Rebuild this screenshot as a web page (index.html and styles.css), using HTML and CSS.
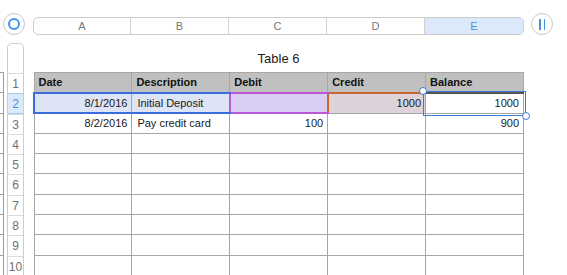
FILE: index.html
```html
<!DOCTYPE html>
<html lang="en">
<head>
    <meta charset="UTF-8">
    <title>Table 6</title>
    <link rel="stylesheet" href="styles.css">
</head>
<body>
    <div class="topbar">
        <div class="circle-btn"><span class="ring"></span></div>
        <div class="col-headers">
            <div class="col-h">A</div>
            <div class="col-h">B</div>
            <div class="col-h">C</div>
            <div class="col-h">D</div>
            <div class="col-h active">E</div>
        </div>
        <div class="circle-btn pause"><span class="bar"></span><span class="bar"></span></div>
    </div>

    <div class="sheet">
        <div class="edge">
            <div class="edge-cell"></div><div class="edge-cell"></div><div class="edge-cell"></div>
            <div class="edge-cell"></div><div class="edge-cell"></div><div class="edge-cell"></div>
            <div class="edge-cell"></div><div class="edge-cell"></div><div class="edge-cell"></div>
            <div class="edge-cell"></div>
        </div>
        <div class="row-headers">
            <div class="rh-top"></div>
            <div class="rh">1</div>
            <div class="rh active">2</div>
            <div class="rh">3</div>
            <div class="rh">4</div>
            <div class="rh">5</div>
            <div class="rh">6</div>
            <div class="rh">7</div>
            <div class="rh">8</div>
            <div class="rh">9</div>
            <div class="rh">10</div>
        </div>
        <div class="table-wrap">
            <div class="title">Table 6</div>
            <table>
                <tr class="head">
                    <th>Date</th><th>Description</th><th>Debit</th><th>Credit</th><th>Balance</th>
                </tr>
                <tr>
                    <td class="num hl-a">8/1/2016</td>
                    <td class="hl-b">Initial Deposit</td>
                    <td class="hl-c"></td>
                    <td class="num hl-d">1000</td>
                    <td class="num sel">1000<span class="handle tl"></span><span class="handle br"></span></td>
                </tr>
                <tr>
                    <td class="num">8/2/2016</td>
                    <td>Pay credit card</td>
                    <td class="num">100</td>
                    <td></td>
                    <td class="num">900</td>
                </tr>
                <tr><td></td><td></td><td></td><td></td><td></td></tr>
                <tr><td></td><td></td><td></td><td></td><td></td></tr>
                <tr><td></td><td></td><td></td><td></td><td></td></tr>
                <tr><td></td><td></td><td></td><td></td><td></td></tr>
                <tr><td></td><td></td><td></td><td></td><td></td></tr>
                <tr><td></td><td></td><td></td><td></td><td></td></tr>
                <tr><td></td><td></td><td></td><td></td><td></td></tr>
            </table>
        </div>
    </div>
</body>
</html>
```

FILE: styles.css
```css
body {
    margin: 0;
    background: #fff;
    font-family: "Liberation Sans", Arial, sans-serif;
    color: #111;
    overflow: hidden;
}
.topbar {
    display: flex;
    align-items: center;
    height: 22px;
    margin-top: 13px;
    padding-left: 3px;
}
.circle-btn {
    width: 20px;
    height: 20px;
    border: 1px solid #c9c9c9;
    border-radius: 50%;
    display: flex;
    align-items: center;
    justify-content: center;
    flex: none;
}
.ring {
    width: 8px;
    height: 8px;
    border: 2px solid #3d95ee;
    border-radius: 50%;
}
.pause {
    margin-left: 7px;
    gap: 3px;
}
.pause .bar {
    width: 1.5px;
    height: 11px;
    background: #4a90e2;
}
.col-headers {
    display: flex;
    margin-left: 8px;
    width: 491px;
    height: 18px;
    margin-top: 3px;
    box-sizing: border-box;
    border: 1px solid #cbcbcb;
    border-radius: 5px;
    overflow: hidden;
}
.col-h {
    flex: none;
    box-sizing: border-box;
    width: 98px;
    border-right: 1px solid #d2d2d2;
    text-align: center;
    font-size: 11px;
    line-height: 16px;
    color: #777;
}
.col-h:first-child {
    width: 97px;
}
.col-h.active {
    flex: 1;
    border-right: none;
    background: #dce9fb;
    color: #4a90e2;
}
.sheet {
    display: flex;
    align-items: flex-start;
    margin-top: 8px;
}
.edge {
    width: 3px;
    margin-top: 29px;
    border-right: 1px solid #9c9c9c;
}
.edge-cell {
    box-sizing: border-box;
    height: 20.3px;
    border-top: 1px solid #9c9c9c;
}
.row-headers {
    margin-left: 3px;
    width: 17px;
    box-sizing: border-box;
    border: 1px solid #cdcdcd;
    border-bottom: none;
    border-radius: 5px 5px 0 0;
}
.rh-top {
    height: 29px;
}
.rh {
    box-sizing: border-box;
    height: 20.3px;
    border-top: 1px solid #dcdcdc;
    text-align: center;
    font-size: 12px;
    line-height: 20px;
    color: #707070;
}
.rh.active {
    background: #dce9fb;
    color: #4a90e2;
    border-top-color: #a9c6ea;
    border-bottom: 1px solid #a9c6ea;
}
.table-wrap {
    margin-left: 9px;
    width: 491px;
}
.title {
    height: 29px;
    line-height: 31px;
    text-align: center;
    font-size: 13px;
    color: #222;
}
table {
    width: 491px;
    table-layout: fixed;
    border-collapse: collapse;
}
tr {
    height: 20.3px;
}
th, td {
    border: 1px solid #a6a6a6;
    padding: 0 5px;
    font-size: 11px;
    white-space: nowrap;
    text-align: left;
    color: #1a1a1a;
}
th {
    background: #bfc0bf;
    font-weight: bold;
    padding-left: 4px;
    color: #111;
}
.num {
    text-align: right;
    padding-right: 4px;
}
.hl-a {
    background: #dde4f5;
    border-top: 2px solid #3a6cdb;
    border-bottom: 2px solid #3a6cdb;
    border-left: 2px solid #3a6cdb;
}
.hl-b {
    background: #dde4f5;
    border-top: 2px solid #3a6cdb;
    border-bottom: 2px solid #3a6cdb;
}
.hl-c {
    background: #d9cdf2;
    border: 2px solid #b85ad8;
    border-right: 1px solid #a6a6a6;
}
.hl-d {
    background: #dbd3d9;
    border-top: 2px solid #c8682e;
    border-left: 2px solid #c8682e;
}
.sel {
    position: relative;
    border-top: 2px solid #555;
}
.sel::before {
    content: "";
    position: absolute;
    top: -3px;
    left: -3px;
    right: -3px;
    bottom: -3px;
    border: 1px solid #3a7bd5;
}
.handle {
    position: absolute;
    width: 6px;
    height: 6px;
    border: 1px solid #3a7bd5;
    border-radius: 50%;
    background: #fff;
}
.handle.tl {
    top: -7px;
    left: -7px;
}
.handle.br {
    bottom: -7px;
    right: -7px;
}
```
